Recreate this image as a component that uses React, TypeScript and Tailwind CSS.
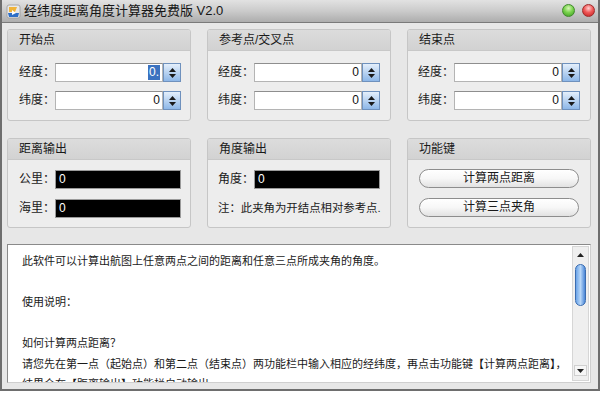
import React from "react";

function UpDown() {
  return (
    <div className="flex flex-col items-center gap-[2px]">
      <svg width="7" height="4" viewBox="0 0 7 4"><path d="M3.5 0 L7 4 L0 4 Z" fill="#1a1a1a" /></svg>
      <svg width="7" height="4" viewBox="0 0 7 4"><path d="M0 0 L7 0 L3.5 4 Z" fill="#1a1a1a" /></svg>
    </div>
  );
}

function SpinInput({ selected = false }: { selected?: boolean }) {
  return (
    <div className="flex h-[19px]">
      <div className="w-[108px] bg-white border border-[#b4b4b4] border-t-[#8e8e8e] flex items-center justify-end pr-[2px] text-[12px] leading-[15px] text-[#111]">
        {selected ? <span className="bg-[#3a72c0] text-white px-[1px]">0.</span> : <span>0</span>}
      </div>
      <div className="w-[18px] border border-[#6f91bd] bg-gradient-to-b from-[#e4effb] via-[#b9d3f1] to-[#8db7e8] flex items-center justify-center">
        <UpDown />
      </div>
    </div>
  );
}

function Row({ label, children }: { label: string; children: React.ReactNode }) {
  return (
    <div className="flex items-center h-[19px]">
      <div className="w-[36px] text-[12px] leading-[19px] text-[#1a1a1a]">{label}</div>
      {children}
    </div>
  );
}

function Panel({ title, children, h }: { title: string; children: React.ReactNode; h: string }) {
  return (
    <div className={`w-[184px] ${h} rounded-[3px] border border-[#c6c6c6] bg-[#ededed] overflow-hidden flex flex-col`}>
      <div className="h-[21px] shrink-0 bg-gradient-to-b from-[#dcdcdc] to-[#d2d2d2] border-b border-[#c8c8c8] pl-[11px] text-[12px] leading-[20px] text-[#1a1a1a]">
        {title}
      </div>
      {children}
    </div>
  );
}

function BlackField() {
  return (
    <div className="w-[126px] h-[19px] bg-black border border-[#9a9a9a] text-white text-[12px] leading-[17px] pl-[3px]">0</div>
  );
}

function PillButton({ label }: { label: string }) {
  return (
    <div className="w-[160px] h-[19px] rounded-full border border-[#8d8d8d] bg-gradient-to-b from-white via-[#f7f7f7] to-[#e2e2e2] flex items-center justify-center text-[12px] leading-[17px] text-[#1a1a1a] shadow-[inset_0_1px_0_#fff]">
      {label}
    </div>
  );
}

export default function App() {
  const lines = [
    "此软件可以计算出航图上任意两点之间的距离和任意三点所成夹角的角度。",
    "",
    "使用说明：",
    "",
    "如何计算两点距离？",
    "请您先在第一点（起始点）和第二点（结束点）两功能栏中输入相应的经纬度，再点击功能键【计算两点距离】，",
    "结果会在【距离输出】功能栏自动输出",
  ];
  return (
    <div className="w-[600px] h-[396px] bg-white overflow-hidden font-[family-name:'Liberation_Sans','Noto_Sans_CJK_SC',sans-serif]">
      <div className="w-[600px] h-[391px] flex flex-col border-l-2 border-r-2 border-b-2 border-[#6e6e6e] bg-[#e7e7e7]">
        {/* title bar */}
        <div className="h-[23px] shrink-0 flex items-center bg-gradient-to-b from-[#e2e2e2] via-[#cbcbcb] to-[#adadad] border-b border-[#7a7a7a]">
          <div className="w-[20px] flex justify-center ml-[1px]">
            <svg width="15" height="15" viewBox="0 0 15 15">
              <rect x="1" y="1" width="13" height="13" rx="2" fill="#e8e8e8" stroke="#9a9a9a" strokeWidth="0.8" />
              <path d="M3 3 L11 3 L9 8 L3 8 Z" fill="#f0b43a" />
              <path d="M2 9 L13 9 L12 13 L3 13 Z" fill="#2f6fc7" />
              <path d="M6 6 L10 9 L6 11 Z" fill="#ffffff" />
            </svg>
          </div>
          <div className="ml-[1px] text-[13px] leading-[20px] text-[#161616]">经纬度距离角度计算器免费版 V2.0</div>
          <div className="flex-1" />
          <div className="flex items-center gap-[7px] mr-[3px] mb-[1px]">
            <div className="w-[13px] h-[13px] rounded-full border border-[#3f8a2a] bg-[radial-gradient(circle_at_50%_30%,#d8f5b8_0%,#7bd44f_45%,#3c9a21_100%)]" />
            <div className="w-[13px] h-[13px] rounded-full border border-[#a02a2a] bg-[radial-gradient(circle_at_50%_30%,#ffd0d0_0%,#f05a5a_45%,#c01e1e_100%)]" />
          </div>
        </div>

        {/* content */}
        <div className="flex-1 flex flex-col pl-[5px] pr-[7px] pt-[6px] pb-[6px]">
          <div className="flex gap-[16px]">
            <Panel title="开始点" h="h-[92px]">
              <div className="flex flex-col gap-[9px] pt-[12px] pl-[11px]">
                <Row label="经度："><SpinInput selected /></Row>
                <Row label="纬度："><SpinInput /></Row>
              </div>
            </Panel>
            <Panel title="参考点/交叉点" h="h-[92px]">
              <div className="flex flex-col gap-[9px] pt-[12px] pl-[10px]">
                <Row label="经度："><SpinInput /></Row>
                <Row label="纬度："><SpinInput /></Row>
              </div>
            </Panel>
            <Panel title="结束点" h="h-[92px]">
              <div className="flex flex-col gap-[9px] pt-[12px] pl-[10px]">
                <Row label="经度："><SpinInput /></Row>
                <Row label="纬度："><SpinInput /></Row>
              </div>
            </Panel>
          </div>

          <div className="flex gap-[16px] mt-[17px]">
            <Panel title="距离输出" h="h-[90px]">
              <div className="flex flex-col gap-[10px] pt-[10px] pl-[11px]">
                <Row label="公里："><BlackField /></Row>
                <Row label="海里："><BlackField /></Row>
              </div>
            </Panel>
            <Panel title="角度输出" h="h-[90px]">
              <div className="flex flex-col gap-[10px] pt-[10px] pl-[10px]">
                <Row label="角度："><BlackField /></Row>
                <div className="h-[19px] text-[11.4px] leading-[19px] text-[#1a1a1a] whitespace-nowrap">注：此夹角为开结点相对参考点.</div>
              </div>
            </Panel>
            <Panel title="功能键" h="h-[90px]">
              <div className="flex flex-col gap-[10px] pt-[9px] pl-[11px]">
                <PillButton label="计算两点距离" />
                <PillButton label="计算三点夹角" />
              </div>
            </Panel>
          </div>

          <div className="mt-[16px] h-[139px] flex bg-white border border-[#8a8a8a] border-r-[#cfcfcf] border-b-[#cfcfcf] overflow-hidden">
            <div className="flex-1 pl-[14px] pt-[6px] text-[11px] leading-[20.5px] text-[#1a1a1a] overflow-hidden">
              {lines.map((l, i) => (
                <div key={i} className="h-[20.5px] whitespace-nowrap">{l}</div>
              ))}
            </div>
            <div className="w-[17px] my-[1px] mr-[1px] bg-[#efefef] border border-[#d6d6d6] flex flex-col items-center">
              <div className="w-[13px] h-[11px] mt-[2px] flex items-center justify-center">
                <svg width="7" height="4" viewBox="0 0 7 4"><path d="M3.5 0 L7 4 L0 4 Z" fill="#222" /></svg>
              </div>
              <div className="mt-[4px] w-[11px] h-[42px] rounded-full border border-[#3a6cb0] bg-gradient-to-r from-[#6aa3e8] via-[#b7d6f7] to-[#4a86d6]" />
              <div className="flex-1" />
              <div className="w-[13px] h-[11px] mb-[4px] flex items-center justify-center border border-[#d0d0d0] bg-[#f6f6f6]">
                <svg width="7" height="4" viewBox="0 0 7 4"><path d="M0 0 L7 0 L3.5 4 Z" fill="#222" /></svg>
              </div>
            </div>
          </div>
        </div>
      </div>
    </div>
  );
}
